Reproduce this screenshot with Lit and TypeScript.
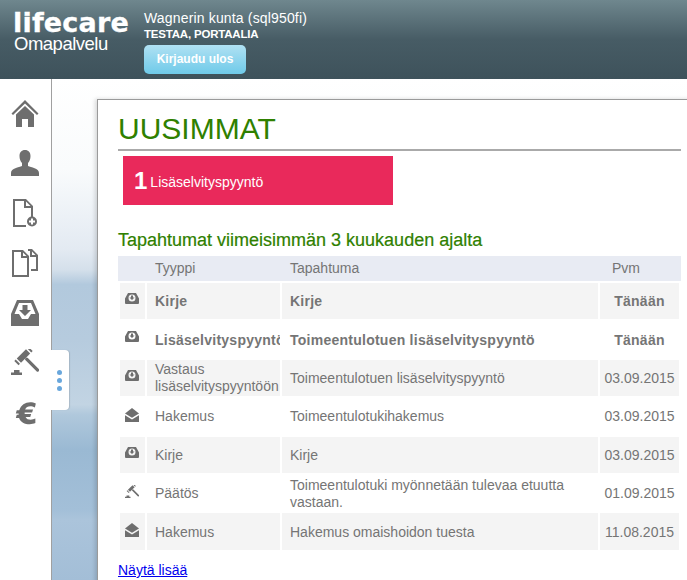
import { LitElement, html, css, svg } from "lit";
import { customElement } from "lit/decorators.js";

const gavelShape = svg`<g transform="translate(12.500 7) rotate(45)"><rect x="-3" y="-6.500" width="6" height="13"/><rect x="-3" y="-10" width="6" height="2"/><rect x="-3" y="8" width="6" height="2"/><rect x="3" y="-1.600" width="18.500" height="3.200" rx="1.500"/></g><path d="M3 21h5.500v2.500H11V26H0v-2.500h3z"/>`;
const inbox = svg`<path fill-rule="evenodd" d="M3 0h8l3 5.500V10q0 1-1 1H1q-1 0-1-1V5.500z M7 1.500a3.500 3.500 0 1 0 0 7 3.500 3.500 0 0 0 0-7z"/><path d="M6 2.500h2v2h1.500L7 7 4.500 4.500H6z"/>`;
const mail = svg`<path d="M7 0l7 5.500L7 9.800 0 5.500z"/><path d="M0 7.300l7 4.200 7-4.200V14H0z"/>`;
const gavel = svg`<g transform="scale(.5)">${gavelShape}</g>`;

const rows = [
  { i: inbox, t: "Kirje", e: "Kirje", d: "Tänään", b: true },
  { i: inbox, t: "Lisäselvityspyyntö", e: "Toimeentulotuen lisäselvityspyyntö", d: "Tänään", b: true },
  { i: inbox, t: "Vastaus lisäselvityspyyntöön", e: "Toimeentulotuen lisäselvityspyyntö", d: "03.09.2015", b: false },
  { i: mail, t: "Hakemus", e: "Toimeentulotukihakemus", d: "03.09.2015", b: false },
  { i: inbox, t: "Kirje", e: "Kirje", d: "03.09.2015", b: false },
  { i: gavel, t: "Päätös", e: "Toimeentulotuki myönnetään tulevaa etuutta vastaan.", d: "01.09.2015", b: false },
  { i: mail, t: "Hakemus", e: "Hakemus omaishoidon tuesta", d: "11.08.2015", b: false },
];

@customElement("app-root")
export class AppRoot extends LitElement {
  static styles = css`
    :host { display: block; width: 687px; height: 580px; overflow: hidden; font-family: "Liberation Sans", Arial, sans-serif; color: #757575; position: relative; }
    header { height: 79px; box-sizing: border-box; background: linear-gradient(#6f878e, #475c65 50%, #3e525b); display: flex; color: #fff; }
    .logo { width: 144px; box-sizing: border-box; padding: 10px 0 0 13px; }
    .brand { font-family: "DejaVu Sans", sans-serif; font-size: 27px; font-weight: 700; line-height: 26px; letter-spacing: 0.2px; -webkit-text-stroke: 0.3px #fff; }
    .sub { font-size: 18.500px; line-height: 16px; letter-spacing: -0.5px; margin-left: 1px; }
    .who { padding-top: 10px; }
    .org { font-size: 14px; line-height: 17px; letter-spacing: 0.16px; }
    .user { font-size: 11.500px; font-weight: 700; line-height: 15px; letter-spacing: -0.2px; }
    .logout { display: block; margin-top: 3px; width: 102px; height: 29px; box-sizing: border-box; border: 0; border-radius: 5px; background: linear-gradient(#b0e1f3, #6fcae9); color: #fff; font: 700 12px "Liberation Sans", Arial, sans-serif; padding: 0 0 1px; }
    .body { display: flex; height: 501px; }
    nav { flex: none; background: #fff; border-right: 1px solid #a0a0a0; display: flex; flex-direction: column; gap: 22px; padding: 20px 0 0 11px; box-sizing: border-box; position: relative; width: 52px; }
    nav svg { display: block; fill: #6e6e6e; width: 28px; height: 28px; }
    .tab { position: absolute; left: 51px; top: 271px; width: 18px; height: 60px; box-sizing: border-box; padding-right: 1px; background: #fff; border-radius: 0 4px 4px 0; box-shadow: 1px 0 1px rgba(0,0,0,.12); display: flex; flex-direction: column; align-items: center; justify-content: center; gap: 3px; }
    .tab i { width: 5px; height: 5px; border-radius: 50%; background: #69a7dc; }
    main { flex: 1; min-width: 0; padding: 20px 0 0 45px; overflow: hidden; background: linear-gradient(#fff 0, #f9fbfc 18%, #e3eaf2 34%, #d5e0eb 38%, #b2c9dd 41%, #b6cbde 52%, #c2d4e3 65%, #b0c8dc 67%, #9ab9d3 74%, #a3bfd8 86%, #abc4db 88%, #a3bed7 100%); }
    .panel { width: 600px; height: 490px; box-sizing: border-box; background: #fff; border-top: 1px solid #9a9a9a; border-left: 1px solid #9a9a9a; box-shadow: -2px 0 4px rgba(0,0,0,.15); padding: 8px 0 0 20px; }
    h1 { margin: 0; width: 563px; box-sizing: border-box; font-size: 30px; font-weight: 400; line-height: 42px; color: #2f8000; border-bottom: 2px solid #aaa; height: 43px; }
    .badge { margin: 5px 0 0 5px; width: 270px; height: 49px; background: #e9295b; color: #fff; display: flex; align-items: center; padding-left: 11px; box-sizing: border-box; font-size: 14px; gap: 3px; }
    .badge b { font-size: 24px; }
    .badge span { padding-top: 3px; }
    h2 { margin: 24px 0 0; font-size: 18px; font-weight: 400; line-height: 22px; color: #2f8000; -webkit-text-stroke: 0.2px #2f8000; }
    .table { margin-top: 5px; width: 563px; font-size: 14px; line-height: 17px; display: flex; flex-direction: column; gap: 2px; }
    .r { display: grid; grid-template-columns: 25px 133px 1fr 79px; column-gap: 2px; padding: 0 2px; box-sizing: border-box; }
    .head { height: 25px; background: #e8ebf3; align-items: center; }
    .c { padding-left: 8px; min-width: 0; overflow: hidden; display: flex; align-items: center; }
    .date { justify-content: center; padding: 0; }
    .head .date { justify-content: flex-start; padding-left: 12px; }
    .row { height: 36.400px; }
    .row .c { padding-top: 1px; box-sizing: border-box; }
    .alt .cell { background: #f4f4f4; }
    .bold .c { font-weight: 700; letter-spacing: 0.25px; white-space: nowrap; }
    .ic { display: block; }
    .ic svg { display: block; width: 14px; height: 14px; fill: #6e6e6e; margin: 10px 0 0 5px; }
    a { display: block; margin-top: 12px; font-size: 14px; color: #0000ee; text-decoration: underline; }
  `;

  render() {
    return html`
      <header>
        <div class="logo"><div class="brand">lifecare</div><div class="sub">Omapalvelu</div></div>
        <div class="who">
          <div class="org">Wagnerin kunta (sql950fi)</div>
          <div class="user">TESTAA, PORTAALIA</div>
          <button class="logout">Kirjaudu ulos</button>
        </div>
      </header>
      <div class="body">
        <nav>
          <svg viewBox="0 0 28 28"><path d="M14 1 27.500 14.500 26 16 14 4.500 2 16 .5 14.500z"/><path d="M14 7 23 15.500V28h-6v-8h-6v8H5V15.500z"/></svg>
          <svg viewBox="0 0 28 28"><path d="M14 1c3.500 0 5.500 2.500 5.500 6 0 3-1 5.500-2.500 7v3c3 1.500 11 2 11 7v3H0v-3c0-5 8-5.500 11-7v-3C9.500 12.500 8.500 10 8.500 7c0-3.500 2-6 5.500-6z"/></svg>
          <svg viewBox="0 0 28 28"><path fill-rule="evenodd" d="M2 0h13l7 7v12h-2V9h-7V2H4v24h11v2H2z M15 2.500V7h4.500z"/><circle cx="21" cy="22.500" r="5"/><path d="M20 19.500h2V21.500h2v2h-2v2h-2v-2h-2v-2h2z" fill="#fff"/></svg>
          <svg viewBox="0 0 28 28"><path fill-rule="evenodd" d="M1 1h11l6 6v21H1z M3 3v23h13V9h-6V3z M12 3.500V7h3.500z"/><path fill-rule="evenodd" d="M17 0h4l6 6v16h-7v-2h5V8h-6V2h-2z M21 2.500V6h3.500z"/></svg>
          <svg viewBox="0 0 28 28"><path fill-rule="evenodd" d="M6 1h16l6 14v12H0V15z M8 4 3.500 15H8l3 5h6l3-5h4.500L20 4z"/><path d="M11.500 6h5v5h3.500L14 17 8 11h3.500z"/></svg>
          <svg viewBox="0 0 28 28">${gavelShape}</svg>
          <svg viewBox="0 0 28 28"><g transform="translate(2.500 .5) scale(.93 .9)"><path d="M24 4.500 23 9c-1.500-1-3.500-1.500-5-1.500-2.500 0-4.500 1-5.500 3.500H21l-1 3.500h-8v1.500h7l-1 3.500h-5c1 2.300 3 3 5.500 3 1.800 0 3.500-.5 5-1.300v5c-1.800.8-4 1.300-6 1.300C12 27.500 7.500 25 6 20.500H2.500l1-3.500h2V15.500H2.500l1-3.500h2.700C8 6 12.500 3 18 3c2 0 4.300.5 6 1.500z"/></g></svg>
          <div class="tab"><i></i><i></i><i></i></div>
        </nav>
        <main>
          <div class="panel">
            <h1>UUSIMMAT</h1>
            <div class="badge"><b>1</b><span>Lisäselvityspyyntö</span></div>
            <h2>Tapahtumat viimeisimmän 3 kuukauden ajalta</h2>
            <div class="table">
              <div class="r head"><div></div><div class="c">Tyyppi</div><div class="c">Tapahtuma</div><div class="c date">Pvm</div></div>
              ${rows.map((r, n) => html`
                <div class="r row ${n % 2 === 0 ? "alt" : ""} ${r.b ? "bold" : ""}">
                  <div class="cell ic"><svg viewBox="0 0 14 14">${r.i}</svg></div>
                  <div class="cell c">${r.t}</div>
                  <div class="cell c">${r.e}</div>
                  <div class="cell c date">${r.d}</div>
                </div>`)}
            </div>
            <a href="#">Näytä lisää</a>
          </div>
        </main>
      </div>
    `;
  }
}
